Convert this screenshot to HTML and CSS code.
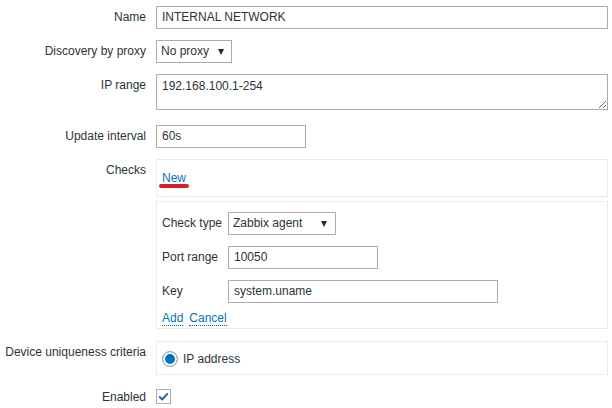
FILE: index.html
```html
<!DOCTYPE html>
<html>
<head>
<meta charset="utf-8">
<link rel="stylesheet" href="styles.css">
</head>
<body>
<div class="form">
  <div class="label">Name</div>
  <div class="field"><div class="input wide">INTERNAL NETWORK</div></div>

  <div class="label">Discovery by proxy</div>
  <div class="field"><div class="select proxy"><span>No proxy</span><span class="arrow"></span></div></div>

  <div class="label">IP range</div>
  <div class="field tall"><textarea class="textarea">192.168.100.1-254</textarea></div>

  <div class="label">Update interval</div>
  <div class="field"><div class="input short">60s</div></div>

  <div class="label">Checks</div>
  <div class="field checks">
    <div class="box newbox"><a class="link new">New</a></div>
    <div class="box checkform">
      <div class="subgrid">
        <div class="sublabel">Check type</div>
        <div><div class="select ctype"><span>Zabbix agent</span><span class="arrow"></span></div></div>
        <div class="sublabel">Port range</div>
        <div><div class="input short">10050</div></div>
        <div class="sublabel">Key</div>
        <div><div class="input key">system.uname</div></div>
      </div>
      <div class="actions"><a class="link dotted">Add</a><a class="link dotted">Cancel</a></div>
    </div>
  </div>

  <div class="label">Device uniqueness criteria</div>
  <div class="field"><div class="box radiobox"><span class="radio"></span><span class="radiotext">IP address</span></div></div>

  <div class="label enabled">Enabled</div>
  <div class="field"><span class="checkbox"><svg width="11" height="9" viewBox="0 0 11 9"><path d="M1.2 4.6 L4.2 7.4 L9.8 1.4" fill="none" stroke="#1a66a8" stroke-width="2"/></svg></span></div>
</div>
</body>
</html>
```

FILE: styles.css
```css
* { box-sizing: border-box; }
html, body { margin: 0; padding: 0; background: #fff; }
body {
  font-family: "Liberation Sans", Arial, sans-serif;
  font-size: 12px;
  color: #2a353b;
}
.form {
  display: grid;
  grid-template-columns: 156px 452px;
  row-gap: 11px;
  padding-top: 6px;
}
.label {
  text-align: right;
  padding-right: 10px;
  line-height: 23px;
  white-space: nowrap;
}
.label.enabled { line-height: 22px; }
.field { min-width: 0; }
.field.tall { padding-bottom: 4px; }
.input, .select {
  height: 23px;
  border: 1px solid #acacac;
  background: #fff;
  line-height: 21px;
  padding: 0 5px;
  white-space: nowrap;
}
.input.wide { width: 452px; }
.input.short { width: 150px; }
.input.key { width: 270px; }
.select {
  display: flex;
  justify-content: space-between;
  align-items: center;
  padding: 0 7px 0 4px;
}
.select.proxy { width: 76px; }
.select.ctype { width: 108px; padding-right: 8px; }
.arrow {
  width: 0; height: 0;
  border-left: 3.5px solid transparent;
  border-right: 3.5px solid transparent;
  border-top: 6px solid #1f2c33;
}
.textarea {
  display: block;
  width: 452px;
  height: 36px;
  border: 1px solid #acacac;
  padding: 4px 5px;
  margin: 0;
  font: inherit;
  line-height: 14px;
  color: #2a353b;
  resize: vertical;
  outline: none;
}
.checks { margin-bottom: 1px; }
.box {
  border: 1px solid #ebebeb;
  background: #fff;
}
.newbox {
  height: 38px;
  padding: 10px 5px 0;
  line-height: 16px;
}
.link { color: #0275b8; text-decoration: none; }
.new { position: relative; display: inline-block; }
.new::after {
  content: "";
  position: absolute;
  left: -3px;
  top: 14px;
  width: 30px;
  height: 4px;
  border-radius: 2px;
  background: #d2202c;
}
.checkform {
  margin-top: 4px;
  padding: 10px 5px 2px;
}
.subgrid {
  display: grid;
  grid-template-columns: 66px auto;
  row-gap: 11px;
}
.sublabel { line-height: 23px; }
.actions {
  margin-top: 8px;
  line-height: 16px;
  display: flex;
  gap: 6px;
}
.dotted { border-bottom: 1px dotted #0275b8; line-height: 14px; }
.radiobox {
  height: 34px;
  padding: 0 5px;
  display: flex;
  align-items: center;
  gap: 5px;
}
.radiotext { padding-top: 2px; }
.radio {
  width: 16px; height: 16px;
  margin-top: 1px;
  border-radius: 50%;
  border: 1px solid #acacac;
  background: #0275b8;
  box-shadow: inset 0 0 0 2px #fff;
}
.checkbox {
  display: flex;
  align-items: center;
  justify-content: center;
  width: 15px; height: 15px;
  margin-top: 3px;
  border: 1px solid #acacac;
  background: #fff;
}
```
